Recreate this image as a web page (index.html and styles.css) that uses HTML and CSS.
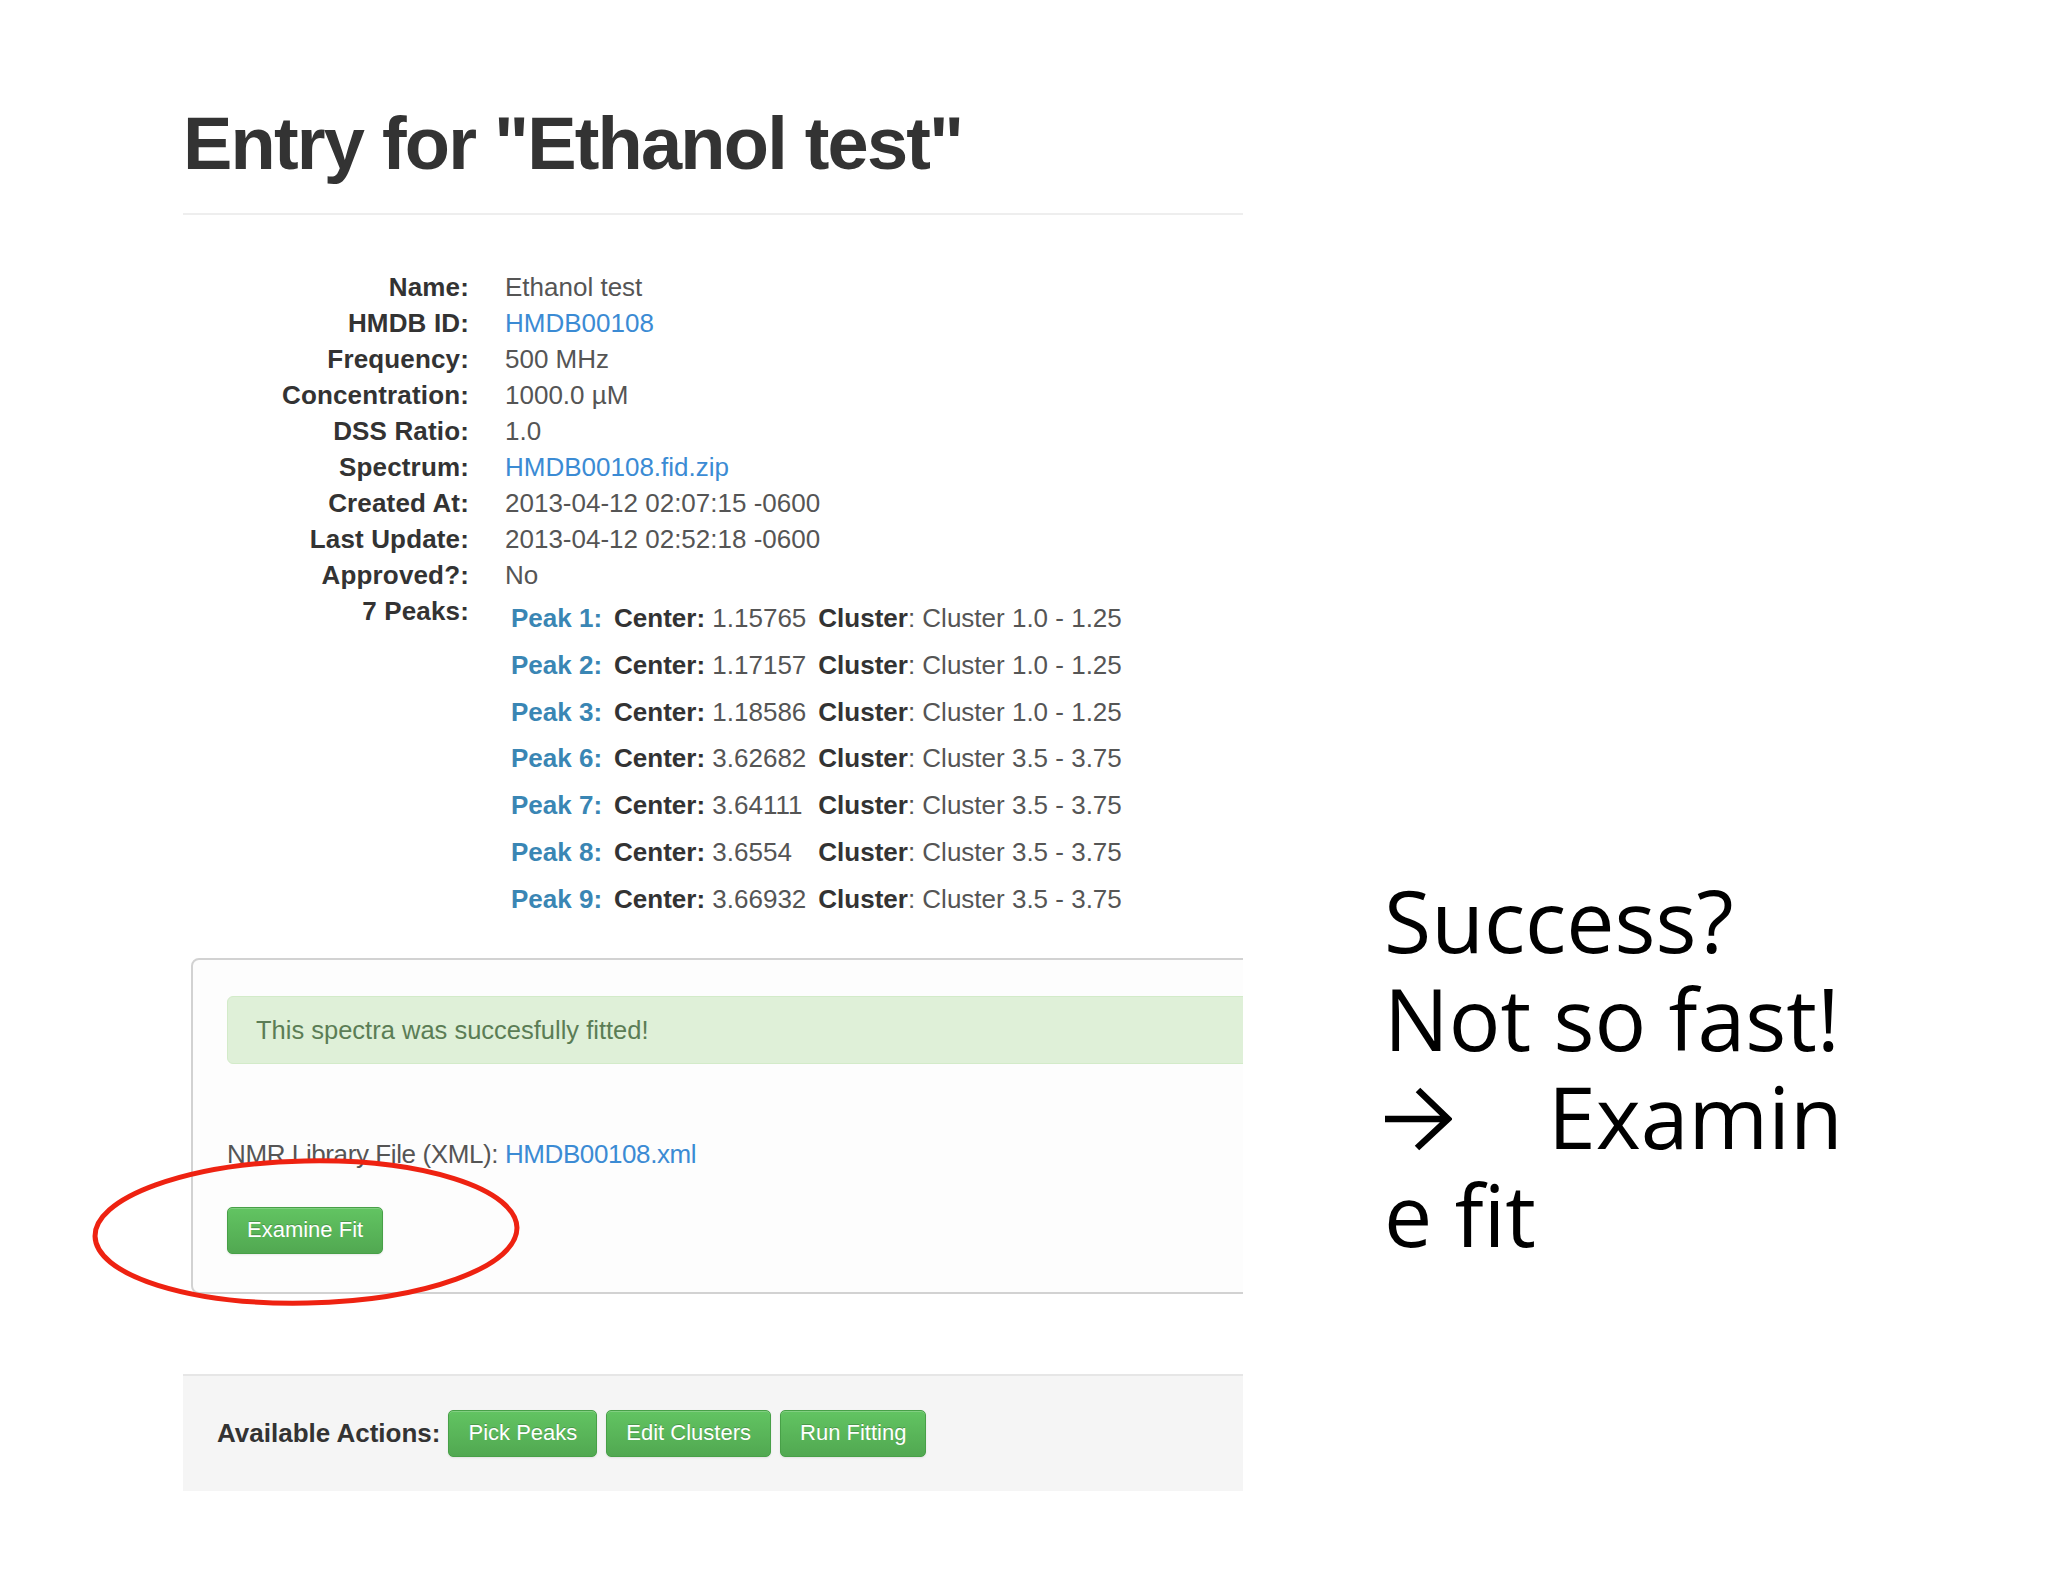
FILE: index.html
```html
<!DOCTYPE html>
<html lang="en">
<head>
<meta charset="utf-8">
<title>Entry for "Ethanol test"</title>
<link rel="stylesheet" href="styles.css">
</head>
<body>
<div class="slide">
  <div class="page">
    <h1 class="page-title">Entry for "Ethanol test"</h1>
    <dl class="details">
      <dt>Name:</dt><dd>Ethanol test</dd>
      <dt>HMDB ID:</dt><dd><a class="link" href="#">HMDB00108</a></dd>
      <dt>Frequency:</dt><dd>500 MHz</dd>
      <dt>Concentration:</dt><dd>1000.0 µM</dd>
      <dt>DSS Ratio:</dt><dd>1.0</dd>
      <dt>Spectrum:</dt><dd><a class="link" href="#">HMDB00108.fid.zip</a></dd>
      <dt>Created At:</dt><dd>2013-04-12 02:07:15 -0600</dd>
      <dt>Last Update:</dt><dd>2013-04-12 02:52:18 -0600</dd>
      <dt>Approved?:</dt><dd>No</dd>
      <dt>7 Peaks:</dt>
      <dd>
        <table class="peaks">
          <tr><td class="peak">Peak 1:</td><td><b>Center:</b> 1.15765</td><td><b>Cluster</b>: Cluster 1.0 - 1.25</td></tr>
          <tr><td class="peak">Peak 2:</td><td><b>Center:</b> 1.17157</td><td><b>Cluster</b>: Cluster 1.0 - 1.25</td></tr>
          <tr><td class="peak">Peak 3:</td><td><b>Center:</b> 1.18586</td><td><b>Cluster</b>: Cluster 1.0 - 1.25</td></tr>
          <tr><td class="peak">Peak 6:</td><td><b>Center:</b> 3.62682</td><td><b>Cluster</b>: Cluster 3.5 - 3.75</td></tr>
          <tr><td class="peak">Peak 7:</td><td><b>Center:</b> 3.64111</td><td><b>Cluster</b>: Cluster 3.5 - 3.75</td></tr>
          <tr><td class="peak">Peak 8:</td><td><b>Center:</b> 3.6554</td><td><b>Cluster</b>: Cluster 3.5 - 3.75</td></tr>
          <tr><td class="peak">Peak 9:</td><td><b>Center:</b> 3.66932</td><td><b>Cluster</b>: Cluster 3.5 - 3.75</td></tr>
        </table>
      </dd>
    </dl>

    <div class="panel">
      <div class="alert">This spectra was succesfully fitted!</div>
      <p class="library">NMR Library File (XML): <a class="link" href="#">HMDB00108.xml</a></p>
      <a class="btn" href="#">Examine Fit</a>
    </div>

    <div class="actions">
      <span class="actions-label">Available Actions:</span>
      <a class="btn" href="#">Pick Peaks</a>
      <a class="btn" href="#">Edit Clusters</a>
      <a class="btn" href="#">Run Fitting</a>
    </div>
  </div>

  <div class="note">
    <div class="note-line">Success?</div>
    <div class="note-line">Not so fast!</div>
    <div class="note-line"><svg class="arrow" width="68" height="64" viewBox="0 0 68 64" aria-hidden="true"><path d="M1 32 H64 M34 3 L64 32 L33 61" fill="none" stroke="#000" stroke-width="6.5" stroke-linejoin="miter" stroke-linecap="butt"/></svg>Examin</div>
    <div class="note-line">e fit</div>
  </div>
</div>

<svg class="circle-mark" width="440" height="160" viewBox="0 0 440 160" aria-hidden="true">
  <ellipse cx="220" cy="80" rx="211" ry="71" fill="none" stroke="#ee2211" stroke-width="5" transform="rotate(-1.2 220 80)"/>
</svg>
</body>
</html>
```

FILE: styles.css
```css
html, body {
  margin: 0;
  padding: 0;
  background: #ffffff;
}

body {
  position: relative;
  width: 2048px;
  height: 1582px;
  overflow: hidden;
  font-family: "Liberation Sans", Arial, sans-serif;
  font-size: 26px;
  line-height: 36px;
  color: #555555;
}

.slide {
  display: flex;
  align-items: flex-start;
}

.page {
  margin-left: 183px;
  width: 1060px;
  padding-top: 103px;
  overflow: hidden;
}

.page-title {
  margin: 0;
  padding-bottom: 28px;
  border-bottom: 2px solid #eeeeee;
  font-size: 74px;
  line-height: 82px;
  font-weight: bold;
  letter-spacing: -1.8px;
  color: #333333;
}

.link {
  color: #3b8bd4;
  text-decoration: none;
}

/* definition list */
.details {
  display: grid;
  grid-template-columns: 286px 1fr;
  column-gap: 36px;
  margin: 54px 0 0 0;
}

.details dt {
  text-align: right;
  font-weight: bold;
  letter-spacing: 0.15px;
  color: #333333;
}

.details dd {
  margin: 0;
  color: #555555;
}

.peaks {
  border-collapse: collapse;
  border-spacing: 0;
}

.peaks td {
  padding: 7px 6px 3.8px 6px;
  white-space: nowrap;
  vertical-align: top;
}

.peaks b {
  color: #333333;
}

.peaks .peak {
  font-weight: bold;
  letter-spacing: 0;
  color: #3a86b4;
}

/* fitted panel */
.panel {
  margin: 37px -60px 0 8px;
  padding: 36px 34px 38px 34px;
  border: 2px solid #d2d2d2;
  border-radius: 8px;
  background: #fdfdfd;
}

.alert {
  padding: 15px 28px;
  border: 1px solid #d3ebc9;
  border-radius: 6px;
  background: #dff0d8;
  color: #5b7d55;
  font-size: 25.5px;
}

.library {
  margin: 72px 0 35px 0;
  letter-spacing: -0.4px;
}

.btn {
  display: inline-block;
  padding: 7px 19px 8px 19px;
  border: 1px solid #48a048;
  border-radius: 5px;
  background: linear-gradient(#62c462, #51a851);
  color: #ffffff;
  font-size: 22px;
  line-height: 30px;
  letter-spacing: 0;
  text-decoration: none;
  text-shadow: 0 -1px 0 rgba(0, 0, 0, 0.2);
  box-shadow: inset 0 1px 0 rgba(255, 255, 255, 0.2), 0 1px 2px rgba(0, 0, 0, 0.08);
}

/* actions bar */
.actions {
  display: flex;
  align-items: center;
  gap: 9px;
  margin-top: 80px;
  padding: 34px 34px 34px 34px;
  border-top: 2px solid #e6e6e6;
  background: #f5f5f5;
}

.actions-label {
  font-weight: bold;
  color: #333333;
  margin-right: -1px;
}

/* slide annotation */
.note {
  margin-left: 141px;
  padding-top: 871px;
  font-family: "Open Sans", "DejaVu Sans", sans-serif;
  font-size: 86px;
  line-height: 98px;
  color: #000000;
  white-space: nowrap;
}

.arrow {
  display: inline-block;
  margin-right: 96px;
  vertical-align: -2px;
}

.circle-mark {
  position: absolute;
  left: 86px;
  top: 1152px;
}
```
